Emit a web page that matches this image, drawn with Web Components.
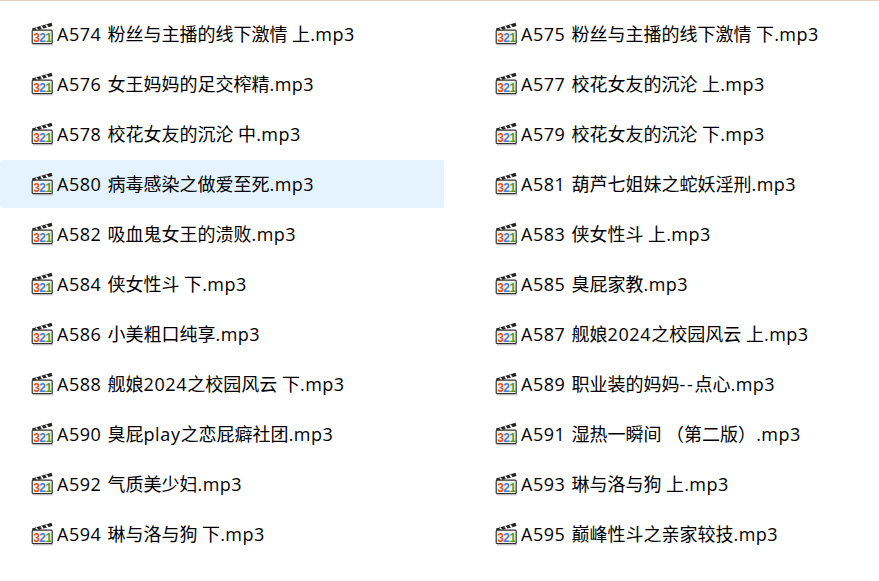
<!DOCTYPE html>
<html lang="zh">
<head>
<meta charset="utf-8">
<title>files</title>
<style>
  html, body { margin: 0; padding: 0; background: #fff; }
  body { font-family: "Open Sans", "Noto Sans CJK SC", sans-serif; overflow: hidden; }
  /* latin runs sit a bit wider than Open Sans in the reference */
  .code { letter-spacing: .5px; word-spacing: 1px; }
  .ext { letter-spacing: .5px; }
  .lat { letter-spacing: .65px; }
  .dash { letter-spacing: 1.7px; }
</style>
</head>
<body>
<file-list>
  <file-row><span class="code">A574 </span>粉丝与主播的线下激情 上<span class="ext">.mp3</span></file-row>
  <file-row><span class="code">A575 </span>粉丝与主播的线下激情 下<span class="ext">.mp3</span></file-row>
  <file-row><span class="code">A576 </span>女王妈妈的足交榨精<span class="ext">.mp3</span></file-row>
  <file-row><span class="code">A577 </span>校花女友的沉沦 上<span class="ext">.mp3</span></file-row>
  <file-row><span class="code">A578 </span>校花女友的沉沦 中<span class="ext">.mp3</span></file-row>
  <file-row><span class="code">A579 </span>校花女友的沉沦 下<span class="ext">.mp3</span></file-row>
  <file-row active><span class="code">A580 </span>病毒感染之做爱至死<span class="ext">.mp3</span></file-row>
  <file-row><span class="code">A581 </span>葫芦七姐妹之蛇妖淫刑<span class="ext">.mp3</span></file-row>
  <file-row><span class="code">A582 </span>吸血鬼女王的溃败<span class="ext">.mp3</span></file-row>
  <file-row><span class="code">A583 </span>侠女性斗 上<span class="ext">.mp3</span></file-row>
  <file-row><span class="code">A584 </span>侠女性斗 下<span class="ext">.mp3</span></file-row>
  <file-row><span class="code">A585 </span>臭屁家教<span class="ext">.mp3</span></file-row>
  <file-row><span class="code">A586 </span>小美粗口纯享<span class="ext">.mp3</span></file-row>
  <file-row><span class="code">A587 </span>舰娘<span class="lat">2024</span>之校园风云 上<span class="ext">.mp3</span></file-row>
  <file-row><span class="code">A588 </span>舰娘<span class="lat">2024</span>之校园风云 下<span class="ext">.mp3</span></file-row>
  <file-row><span class="code">A589 </span>职业装的妈妈<span class="dash">--</span>点心<span class="ext">.mp3</span></file-row>
  <file-row><span class="code">A590 </span>臭屁<span class="lat">play</span>之恋屁癖社团<span class="ext">.mp3</span></file-row>
  <file-row><span class="code">A591 </span>湿热一瞬间 （第二版）<span class="ext">.mp3</span></file-row>
  <file-row><span class="code">A592 </span>气质美少妇<span class="ext">.mp3</span></file-row>
  <file-row><span class="code">A593 </span>琳与洛与狗 上<span class="ext">.mp3</span></file-row>
  <file-row><span class="code">A594 </span>琳与洛与狗 下<span class="ext">.mp3</span></file-row>
  <file-row><span class="code">A595 </span>巅峰性斗之亲家较技<span class="ext">.mp3</span></file-row>
</file-list>

<script>
class MediaIcon extends HTMLElement {
  connectedCallback() {
    this.attachShadow({ mode: "open" });
    this.shadowRoot.innerHTML = `
      <style>
        :host { display: block; width: 23px; height: 23px; flex: none; }
        svg { display: block; overflow: visible; }
        text { font: bold 12px "Liberation Sans", sans-serif; }
      </style>
      <svg width="23" height="23" viewBox="0 0 23 23">
        <path d="M1 6.5 L20.5 .8 L21.5 4 L2 9.5 Z" fill="#222"/>
        <path d="M5 5.7 L7 8.6 M10 4.2 L12 7.2 M15 2.8 L17 5.8" stroke="#f2f2f2" stroke-width="1.7"/>
        <rect x="1.2" y="8.2" width="20" height="13.5" rx="1" fill="#f4f4ee" stroke="#333" stroke-width="1.2"/>
        <path d="M2 22.8 H22" stroke="#b5b5b5" stroke-width="1"/>
        <text x="2.2" y="20" fill="#d9551f">3</text>
        <text x="8.3" y="20" fill="#3f83d6">2</text>
        <text x="14.5" y="20" fill="#4f9a2f">1</text>
      </svg>
    `;
  }
}

class FileRow extends HTMLElement {
  connectedCallback() {
    this.attachShadow({ mode: "open" });
    this.shadowRoot.innerHTML = `
      <style>
        :host {
          display: flex;
          align-items: center;
          gap: 3px;
          height: 48px;
          padding-left: 31px;
          border-radius: 2px;
          font-size: 18px;
          color: #000;
          white-space: nowrap;
        }
        :host([active]) { background: #e5f3ff; }
        span { padding-bottom: 2px; }
      </style>
      <media-icon></media-icon>
      <span><slot></slot></span>
    `;
  }
}

class FileList extends HTMLElement {
  connectedCallback() {
    this.attachShadow({ mode: "open" });
    this.shadowRoot.innerHTML = `
      <style>
        :host {
          display: grid;
          grid-template-columns: 444px 415px;
          column-gap: 20px;
          row-gap: 2px;
          padding-top: 8.5px;
          border-top: 1.5px solid #e3cfc2;
        }
      </style>
      <slot></slot>
    `;
  }
}

customElements.define("media-icon", MediaIcon);
customElements.define("file-row", FileRow);
customElements.define("file-list", FileList);
</script>
</body>
</html>
